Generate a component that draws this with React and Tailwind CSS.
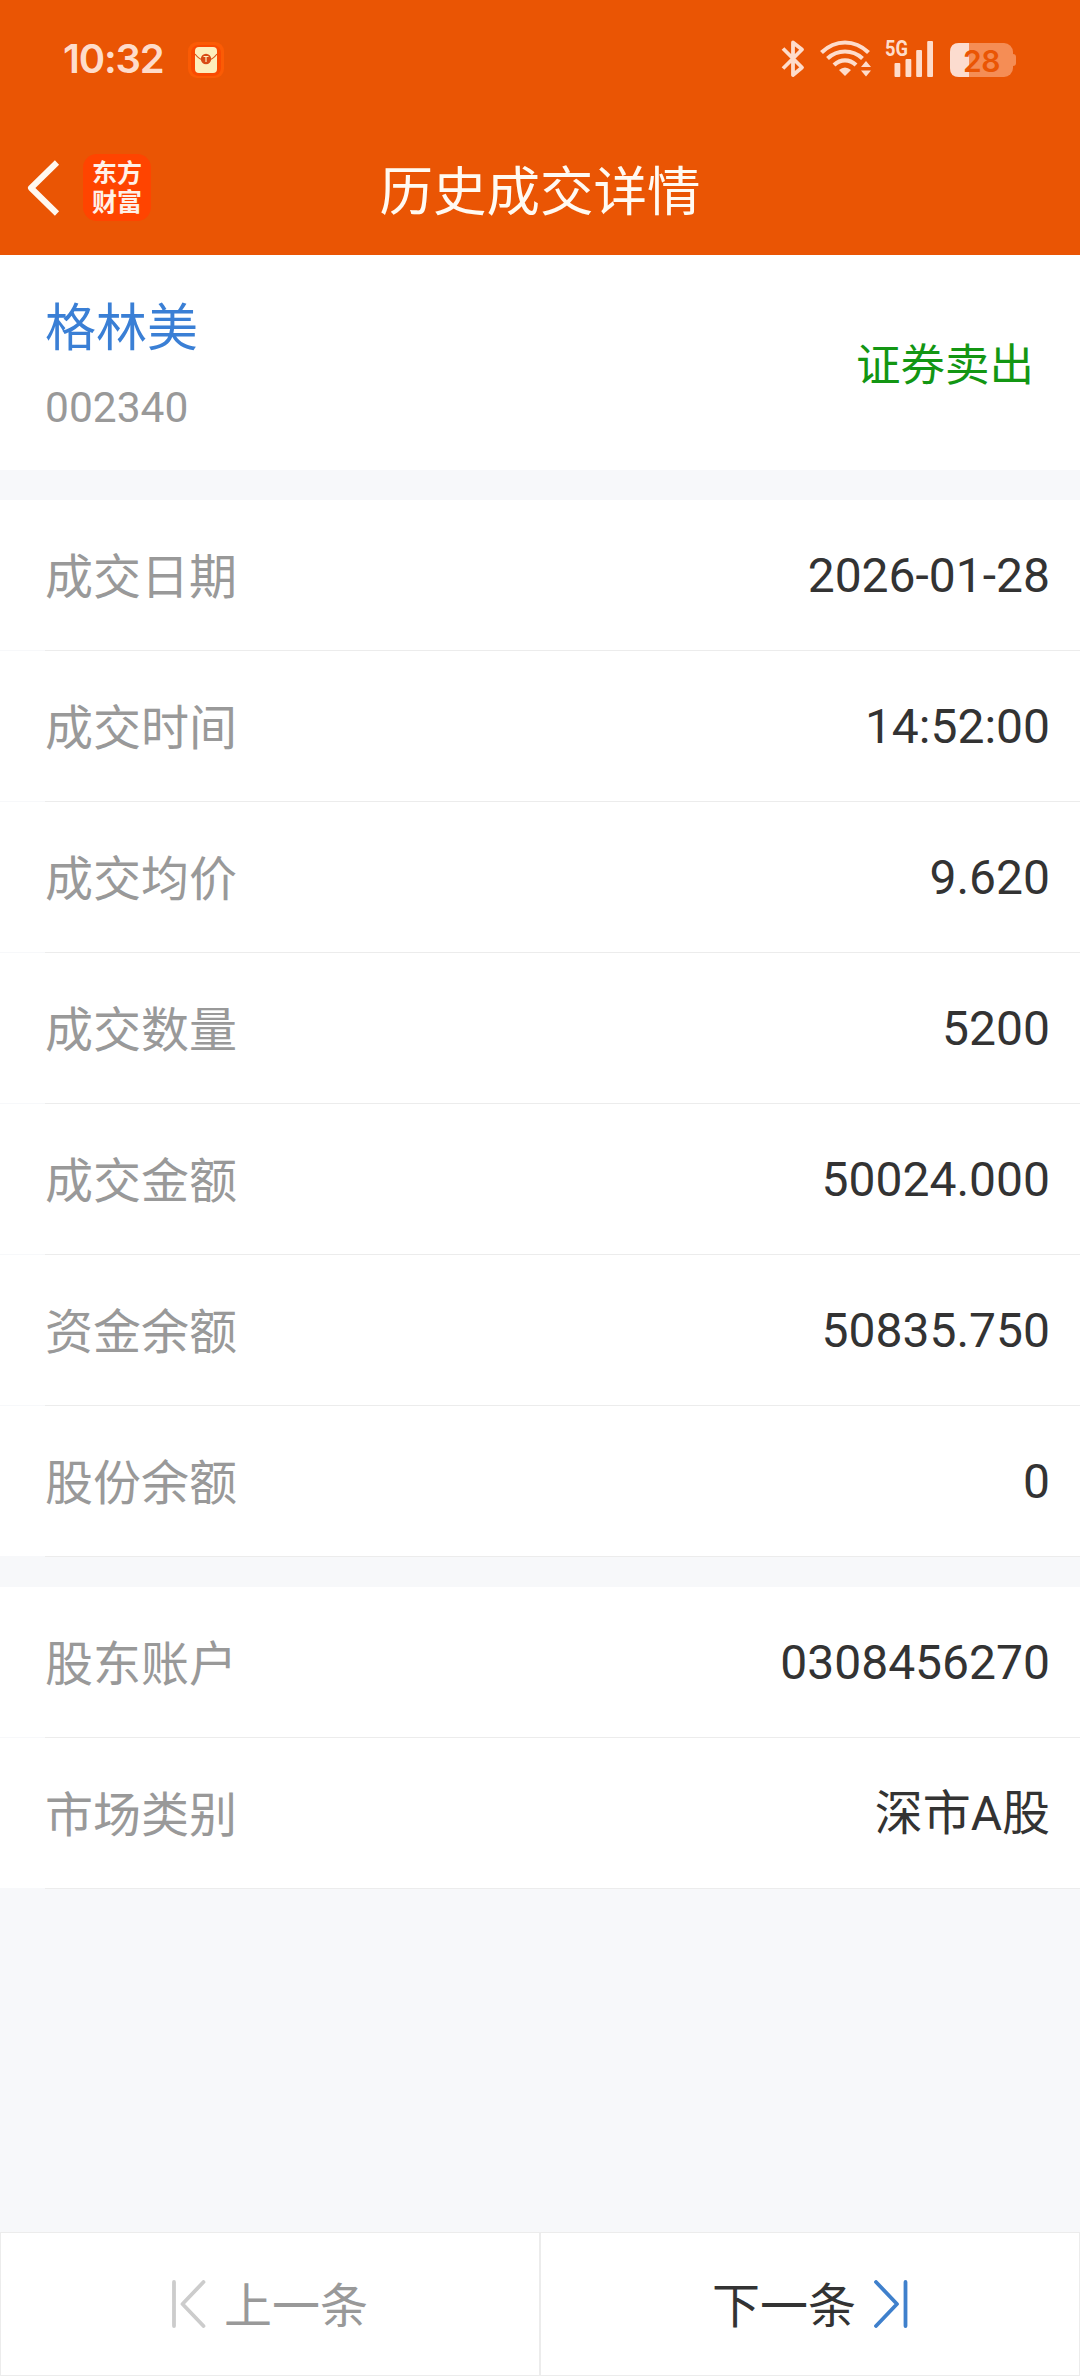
import React from 'react';

const tradeRows = [
  { label: '成交日期', value: '2026-01-28' },
  { label: '成交时间', value: '14:52:00' },
  { label: '成交均价', value: '9.620' },
  { label: '成交数量', value: '5200' },
  { label: '成交金额', value: '50024.000' },
  { label: '资金余额', value: '50835.750' },
  { label: '股份余额', value: '0' },
];

const accountRows = [
  { label: '股东账户', value: '0308456270' },
  { label: '市场类别', value: '深市A股' },
];

const StatusBar = () => (
  <div className="h-[114px] flex items-start justify-between pl-[63px] pr-[64px] pt-[36px] text-[#fedccb]">
    <div className="flex items-start">
      <span className="w-[101px] font-['Inter'] font-semibold text-[40px] leading-[46px] tracking-[-1.2px] whitespace-nowrap">10:32</span>
      {/* Notification badge */}
      <svg className="ml-[24px] mt-[6px]" width="36" height="36" viewBox="0 0 36 36">
        <rect width="36" height="36" rx="9" fill="#fb5b05" />
        <rect x="3" y="3" width="30" height="31" rx="8" fill="#f94a02" />
        <rect x="7" y="5" width="22" height="26" rx="4" fill="#fdeebd" />
        <path d="M7 12 Q11 17 14 17.500 M29 12 Q25 17 22 17.500" stroke="#d9531a" strokeWidth="1.200" fill="none" />
        <circle cx="18" cy="17" r="5.200" fill="#d84a16" />
        <path d="M15.500 14.500h5M18 14.500v5.500" stroke="#fdeebd" strokeWidth="1.200" />
      </svg>
    </div>

    <div className="flex items-start">
      {/* Bluetooth */}
      <svg width="24" height="40" viewBox="0 0 24 40" className="mt-[3px]" fill="none" stroke="currentColor" strokeWidth="3.800" strokeLinejoin="round">
        <path d="M2 9.500L21 28.500L12 36V3.500L21 10.500L2 29.500" />
      </svg>
      {/* Wifi */}
      <svg width="52" height="40" viewBox="0 0 52 40" className="ml-[15px] mt-[3px]" fill="none" stroke="currentColor" strokeWidth="4.200">
        <path d="M1.500 13.500Q12 3.500 25 3.500T48.500 13.500" />
        <path d="M7.500 19.500Q15 12.500 25 12.500T42.500 19.500" />
        <path d="M14 26Q19 21.300 25 21.300T36 26" />
        <path d="M19 31Q25 26 31 31L25 37Z" fill="currentColor" stroke="none" />
        <path d="M41 28L46 22L51 28ZM41 31.500L46 37.500L51 31.500Z" fill="currentColor" stroke="none" />
      </svg>
      {/* Mobile signal */}
      <svg width="50" height="40" viewBox="0 0 50 40" className="ml-[13px] mt-[3px] overflow-visible" fill="currentColor">
        <text x="0" y="17" fontFamily="Roboto" fontWeight="700" fontSize="21.500" textLength="23" lengthAdjust="spacingAndGlyphs">5G</text>
        <rect x="9.500" y="24" width="5.800" height="14" rx="1" />
        <rect x="20.500" y="20" width="5.800" height="18" rx="1" />
        <rect x="31.200" y="11" width="5.800" height="27" rx="1" />
        <rect x="42.200" y="2" width="5.800" height="36" rx="1" />
      </svg>
      {/* Battery */}
      <svg width="66" height="36" viewBox="0 0 66 36" className="ml-[15px] mt-[6px]">
        <rect y="1" width="63" height="34" rx="9" fill="#f58d55" />
        <path d="M63 12q3 0 3 3v6q0 3-3 3z" fill="#f58d55" />
        <path d="M19 1H9Q0 1 0 10V26Q0 35 9 35H19Z" fill="#fcdccf" />
        <text x="31.500" y="29.500" textAnchor="middle" fontFamily="Inter" fontWeight="600" fontSize="30" letterSpacing="-0.500" fill="#ea5504">28</text>
      </svg>
    </div>
  </div>
);

const NavBar = () => (
  <div className="h-[141px] grid grid-cols-[340px_1fr_340px] items-center">
    <div className="flex items-center pl-[26px] pt-[6px]">
      <svg width="34" height="56" viewBox="0 0 34 56" fill="none" stroke="#fff8f0" strokeWidth="6" strokeLinejoin="round">
        <path d="M31 2.500L5 28L31 53.500" />
      </svg>
      <div className="ml-[23px] w-[68px] h-[67px] rounded-[14px] bg-[#ff4400] flex items-center justify-center pb-[3px] text-[#fff1e8]">
        <p className="w-[50px] font-['Noto_Sans_CJK_SC',sans-serif] font-bold text-[25px] leading-[29.5px]">东方财富</p>
      </div>
    </div>
    <h1 className="text-center pt-[16px] text-[53.5px] leading-[80px] text-[#fffaf2]">历史成交详情</h1>
  </div>
);

const DetailRow = ({ label, value }) => (
  <div className="flex h-[151px] bg-white">
    <div className="w-[45px] border-b border-[#f7f8fa]" />
    <div className="flex-1 flex items-center justify-between pt-[5px] pr-[30px] border-b border-[#ececec] text-[48px]">
      <span className="text-[#999999]">{label}</span>
      <span className="pb-[3px] text-[#333333]">{value}</span>
    </div>
  </div>
);

const App = () => {
  return (
    <div className="w-[1080px] h-[2376px] flex flex-col bg-[#f7f8fa] font-['Roboto','Noto_Sans_CJK_SC',sans-serif] overflow-hidden">
      <header className="bg-[#ea5504]">
        <StatusBar />
        <NavBar />
      </header>

      {/* Stock summary */}
      <section className="h-[215px] bg-white flex items-center justify-between pt-[5px] pl-[45px] pr-[46px]">
        <div>
          <div className="text-[51px] leading-[76px] text-[#3a7fd5]">格林美</div>
          <div className="mt-[9px] text-[42.5px] leading-[64px] text-[#999999]">002340</div>
        </div>
        <div className="pt-[2px] text-[44.5px] text-[#139613]">证券卖出</div>
      </section>

      <section className="mt-[30px]">
        {tradeRows.map((row) => (
          <DetailRow key={row.label} {...row} />
        ))}
      </section>

      <section className="mt-[30px]">
        {accountRows.map((row) => (
          <DetailRow key={row.label} {...row} />
        ))}
      </section>

      {/* Prev / next */}
      <footer className="mt-auto h-[144px] grid grid-cols-2 text-[48px]">
        <button type="button" className="flex items-center justify-center border border-[#ececec] bg-white text-[#999999]">
          <svg width="34" height="48" viewBox="0 0 34 48" className="mr-[18px]" fill="none" stroke="#cccccc" strokeWidth="3.800" strokeLinecap="round" strokeLinejoin="round">
            <path d="M2 2V46M31.500 2L10.500 24L31.500 46" />
          </svg>
          <span className="pt-[5px]">上一条</span>
        </button>
        <button type="button" className="flex items-center justify-center border border-[#ececec] bg-white text-[#333333]">
          <span className="pt-[5px]">下一条</span>
          <svg width="34" height="48" viewBox="0 0 34 48" className="ml-[18px]" fill="none" stroke="#3f80cc" strokeWidth="3.800" strokeLinecap="round" strokeLinejoin="round">
            <path d="M31.500 2V46M2 2L23 24L2 46" />
          </svg>
        </button>
      </footer>
    </div>
  );
};

export default App;
